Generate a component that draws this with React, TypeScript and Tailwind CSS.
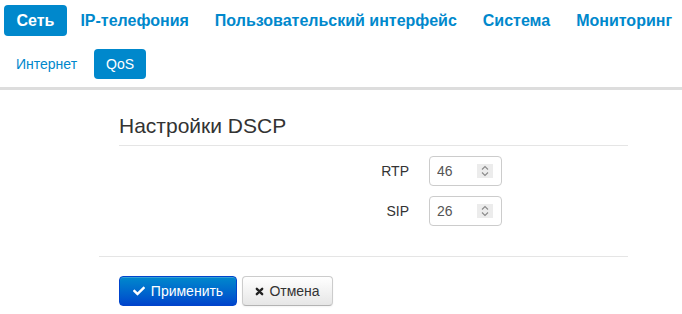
import React from "react";
import { FaCheck } from "react-icons/fa";

function Spinner() {
  return (
    <div className="flex h-[14px] w-[16px] items-center justify-center bg-[#ececec]">
      <svg width="8" height="12" viewBox="0 0 8 12" fill="none" stroke="#8a8a8a" strokeWidth="1.1">
        <path d="M1 4.5 L4 1.5 L7 4.5" />
        <path d="M1 7.5 L4 10.5 L7 7.5" />
      </svg>
    </div>
  );
}

function NumField({ label, value }: { label: string; value: string }) {
  return (
    <div className="flex items-center">
      <div className="w-[409px] text-right text-[14px] text-[#333]">{label}</div>
      <div className="ml-[20px] flex h-[30px] w-[73px] items-center rounded-[4px] border border-[#cccccc] bg-white pl-[7px] pr-[8px]">
        <input
          readOnly
          value={value}
          className="w-0 flex-1 bg-transparent text-[14px] text-[#555] outline-none"
        />
        <Spinner />
      </div>
    </div>
  );
}

export default function App() {
  const top = ["IP-телефония", "Пользовательский интерфейс", "Система", "Мониторинг"];
  return (
    <div className="min-h-[314px] w-[682px] overflow-hidden bg-white font-['Liberation_Sans',Arial,sans-serif]">
      <nav className="flex gap-px whitespace-nowrap pl-[4px] pt-[5px]">
        <a className="flex h-[31px] shrink-0 items-center rounded-[4px] bg-[#0088cc] px-[12.5px] text-[16px] font-bold text-white">
          Сеть
        </a>
        {top.map((t) => (
          <a key={t} className="flex h-[31px] shrink-0 items-center px-[12.5px] text-[16px] font-bold text-[#0088cc]">
            {t}
          </a>
        ))}
      </nav>
      <nav className="mt-[13px] flex gap-[5px] whitespace-nowrap border-b-[3px] border-[#dddddd] pb-[8px] pl-[4px]">
        <a className="flex h-[30px] items-center px-[12px] text-[14px] text-[#0088cc]">Интернет</a>
        <a className="flex h-[30px] items-center rounded-[4px] bg-[#0088cc] px-[12px] text-[14px] text-white">
          QoS
        </a>
      </nav>
      <div className="ml-[119px] mt-[23px] w-[509px] border-b border-[#e5e5e5] pb-[7px]">
        <h3 className="text-[21px] leading-[25px] text-[#333]">Настройки DSCP</h3>
      </div>
      <div className="mt-[10px] flex flex-col gap-[10px]">
        <NumField label="RTP" value="46" />
        <NumField label="SIP" value="26" />
      </div>
      <div className="ml-[99px] mt-[30px] w-[529px] border-t border-[#e5e5e5]" />
      <div className="ml-[119px] mt-[19px] flex gap-[5px]">
        <button className="flex h-[30px] w-[118px] items-center justify-center gap-[6px] rounded-[4px] border border-[#0044cc] bg-gradient-to-b from-[#0088cc] to-[#0044cc] text-[14px] text-white shadow-[inset_0_1px_0_rgba(255,255,255,0.2)]">
          <FaCheck className="h-[12px] w-[12px]" />
          Применить
        </button>
        <button className="flex h-[30px] w-[91px] items-center justify-center gap-[5px] rounded-[4px] border border-[#cccccc] border-b-[#b3b3b3] bg-gradient-to-b from-white to-[#e6e6e6] text-[14px] text-[#333] shadow-[0_1px_2px_rgba(0,0,0,0.05)]">
          <svg width="9" height="9" viewBox="0 0 10 10" stroke="#222" strokeWidth="2.6" strokeLinecap="round">
            <path d="M2 2 L8 8 M8 2 L2 8" />
          </svg>
          Отмена
        </button>
      </div>
    </div>
  );
}
